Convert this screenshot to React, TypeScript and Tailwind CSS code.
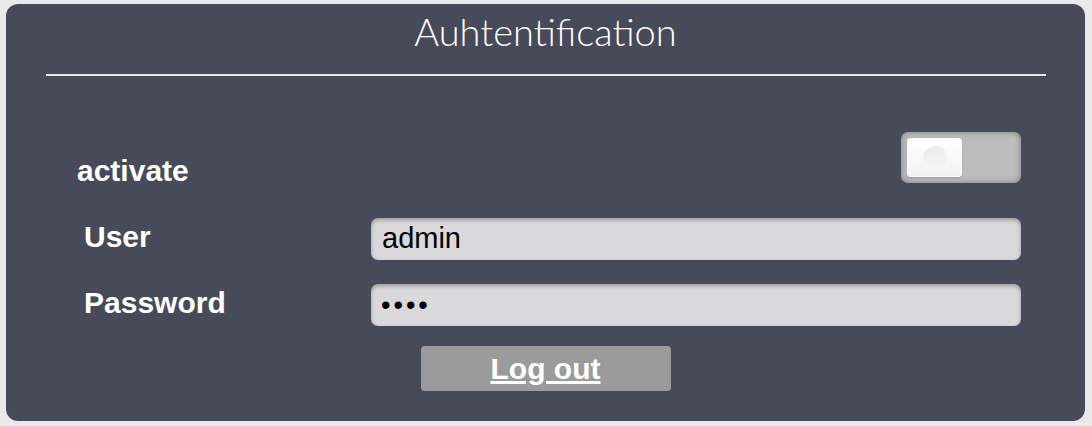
import React from "react";

export default function App() {
  return (
    <div className="w-[1092px] h-[426px] bg-[#e9ebea] pt-[4px] pl-[6px]" style={{ fontFamily: '"Liberation Sans", Arial, sans-serif' }}>
      <div className="w-[1079px] h-[417px] rounded-[12px] bg-[#474a59] flex flex-col">
        <div className="h-[70px] flex justify-center">
          <div className="mt-[3px] text-white text-[38px] leading-[48px] font-light" style={{ fontFamily: 'Lato, "Liberation Sans", sans-serif' }}>
            Auhtentification
          </div>
        </div>
        <div className="ml-[40px] w-[1000px] h-[2px] bg-[#e6e6e6]" />

        <div className="mt-[56px] h-[51px] flex items-start">
          <div className="ml-[71px] mt-[24px] text-white font-bold text-[30px] leading-[29px]">activate</div>
          <div className="ml-auto mr-[64px] w-[120px] h-[51px] rounded-[7px] bg-[#bdbdbd] shadow-[inset_0_0_6px_rgba(0,0,0,0.35)] p-[6px]">
            <div className="w-[55px] h-[39px] rounded-[3px] bg-gradient-to-b from-[#ffffff] to-[#f2f2f2] border border-[#ffffff] flex items-center justify-center shadow-[0_1px_2px_rgba(0,0,0,0.2)]">
              <div className="w-[24px] h-[24px] rounded-full bg-gradient-to-b from-[#ececec] to-[#f6f6f6]" />
            </div>
          </div>
        </div>

        <div className="mt-[35px] h-[42px] flex items-start">
          <div className="ml-[78px] w-[287px] mt-[4px] text-white font-bold text-[30px] leading-[29px]">User</div>
          <div className="w-[650px] h-[42px] rounded-[7px] bg-[#d9d9db] shadow-[inset_0_2px_4px_rgba(0,0,0,0.3)] flex items-center pl-[11px] text-black text-[29px]">
            admin
          </div>
        </div>

        <div className="mt-[24px] h-[42px] flex items-start">
          <div className="ml-[78px] w-[287px] mt-[4px] text-white font-bold text-[30px] leading-[29px]">Password</div>
          <div className="w-[650px] h-[42px] rounded-[7px] bg-[#d9d9db] shadow-[inset_0_2px_4px_rgba(0,0,0,0.3)] flex items-center pl-[10px] text-black text-[27px] tracking-[3px]">
            ••••
          </div>
        </div>

        <div className="mt-[20px] flex justify-center">
          <div className="w-[250px] h-[45px] rounded-[4px] bg-[#9b9b9b] flex items-center justify-center text-white font-bold text-[30px] leading-[29px] underline">
            Log out
          </div>
        </div>
      </div>
    </div>
  );
}
